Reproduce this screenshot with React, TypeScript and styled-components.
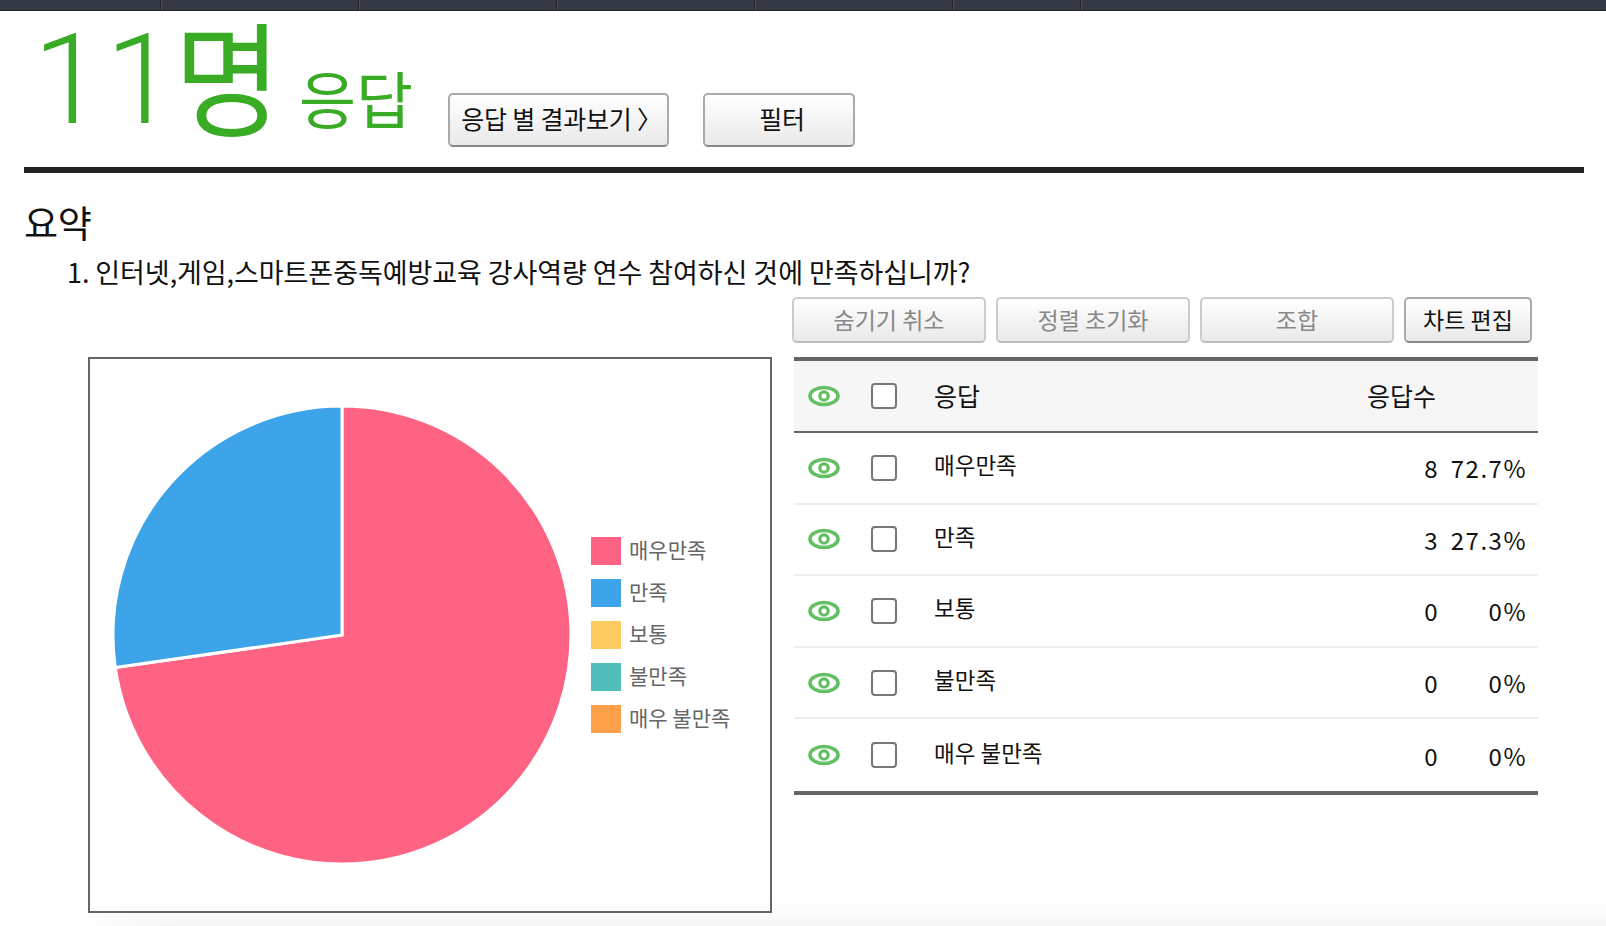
import React from 'react';
import styled, { createGlobalStyle } from 'styled-components';

const GlobalStyle = createGlobalStyle`
  html, body {
    margin: 0;
    padding: 0;
    height: 926px;
    overflow: hidden;
    background: #fff;
    font-family: 'Noto Sans CJK KR', 'Liberation Sans', sans-serif;
    color: #111;
  }
`;

const COLORS = ['#ff6384', '#3ea4ea', '#fdcb5f', '#52bebc', '#ffa04a'];

const ROWS = [
  { label: '매우만족', count: 8, pct: '72.7%' },
  { label: '만족', count: 3, pct: '27.3%' },
  { label: '보통', count: 0, pct: '0%' },
  { label: '불만족', count: 0, pct: '0%' },
  { label: '매우 불만족', count: 0, pct: '0%' },
];

const TopBar = styled.div`
  display: flex;
  height: 10px;
  background: #343744;
  border-bottom: 1px solid #22242c;
`;

const TopTab = styled.div<{ $w: number }>`
  width: ${({ $w }) => $w}px;
  box-sizing: border-box;
  border-right: 1px solid #22242c;
  box-shadow: 1px 0 0 #4c4f5a;
`;

const Page = styled.div`
  padding: 0 22px 0 24px;
`;

const TitleRow = styled.div`
  display: flex;
  align-items: flex-start;
  height: 156px;
  border-bottom: 6px solid #222;
  color: #3aab25;
`;

const Digits = styled.div`
  font-family: 'Roboto', sans-serif;
  font-weight: 300;
  font-size: 127px;
  line-height: 127px;
  letter-spacing: 2px;
  margin-top: 5px;
  padding-left: 9px;
  width: 158px;
  margin-right: -8px;
  box-sizing: border-box;
  white-space: nowrap;
`;

const BigHan = styled.div`
  font-size: 124px;
  line-height: 124px;
  width: 125px;
  white-space: nowrap;
  transform: scaleX(0.94);
  transform-origin: left center;
`;

const Unit = styled.div`
  font-size: 62px;
  line-height: 62px;
  margin-top: 55px;
  width: 149px;
  white-space: nowrap;
`;

const Btn = styled.button<{ $w: number; $off?: boolean }>`
  width: ${({ $w }) => $w}px;
  box-sizing: border-box;
  padding: 0;
  font-family: inherit;
  white-space: nowrap;
  color: ${({ $off }) => ($off ? '#888' : '#111')};
  border: 2px solid ${({ $off }) => ($off ? '#ccc' : '#aaa')};
  border-bottom-color: ${({ $off }) => ($off ? '#bbb' : '#888')};
  border-radius: 5px;
  background: linear-gradient(#fff, #e9e9e9);
`;

const TitleBtn = styled(Btn)`
  height: 54px;
  margin-top: 82px;
  padding: 0 0 4px 6px;
  font-size: 25px;
  line-height: 30px;
  letter-spacing: -0.2px;
  margin-right: 34px;
`;

const Heading = styled.h2`
  margin: 25px 0 0;
  font-size: 37px;
  line-height: 48px;
  font-weight: 400;
  letter-spacing: -0.4px;
`;

const Question = styled.div`
  margin: 7px 0 0 43px;
  font-size: 27px;
  line-height: 38px;
  letter-spacing: -0.07px;
  white-space: nowrap;
`;

const Toolbar = styled.div`
  display: flex;
  gap: 10px;
  margin: 6px 0 0 768px;
`;

const ToolBtn = styled(Btn)`
  height: 46px;
  padding-bottom: 3px;
  font-size: 23px;
  line-height: 30px;
`;

const Body = styled.div`
  display: flex;
  margin: 14px 0 0 64px;
`;

const ChartBox = styled.div`
  width: 684px;
  height: 556px;
  box-sizing: border-box;
  border: 2px solid #666;
  display: flex;
  align-items: center;
  padding-left: 22px;
`;

const PieSvg = styled.svg`
  flex: none;
  width: 460px;
  height: 460px;
`;

const Legend = styled.div`
  display: flex;
  flex-direction: column;
  gap: 14px;
  margin-left: 19px;
`;

const LegendItem = styled.div`
  display: flex;
  align-items: center;
  height: 28px;
  gap: 8px;
  font-size: 21px;
  color: #666;
  white-space: nowrap;
`;

const LegendText = styled.span`
  margin-top: -4px;
`;

const Swatch = styled.span<{ $c: string }>`
  width: 30px;
  height: 28px;
  background: ${({ $c }) => $c};
`;

const Table = styled.div`
  width: 744px;
  margin-left: 22px;
  align-self: flex-start;
  border-top: 4px solid #666;
  border-bottom: 4px solid #666;
`;

const Row = styled.div<{ $head?: boolean }>`
  display: grid;
  grid-template-columns: 77px 63px 1fr 120px 88px;
  align-items: center;
  height: ${({ $head }) => ($head ? '72px' : '71.6px')};
  box-sizing: border-box;
  padding-right: 11px;
  font-size: 22.5px;
  background: ${({ $head }) => ($head ? '#f6f6f6' : '#fff')};
  border-bottom: 2px solid ${({ $head }) => ($head ? '#666' : '#eee')};
  &:last-child { border-bottom: 0; }
`;

const EyeCell = styled.div`
  display: flex;
  justify-content: center;
  padding-right: 18px;
`;

const Check = styled.span`
  width: 26px;
  height: 26px;
  box-sizing: border-box;
  border: 2px solid #777;
  border-radius: 4px;
  background: #fff;
`;

const Label = styled.div`
  margin-top: -7px;
  white-space: nowrap;
`;

const HeadLabel = styled.div`
  margin-top: -2px;
  font-size: 25px;
  white-space: nowrap;
`;

const HeadCount = styled(HeadLabel)`
  grid-column: 4 / span 2;
  padding-left: 48px;
`;

const Num = styled.div`
  font-size: 24px;
  text-align: right;
  letter-spacing: 1.5px;
  white-space: nowrap;
`;

const BottomShade = styled.div`
  position: fixed;
  left: 120px;
  right: -200px;
  top: 950px;
  height: 40px;
  box-shadow: 0 0 60px 6px rgba(0, 0, 0, 0.14);
  pointer-events: none;
`;

const Eye = () => (
  <svg width="32" height="22" viewBox="0 0 32 22">
    <ellipse cx="16" cy="11" rx="14" ry="8.5" fill="#fff" stroke="#62bf62" strokeWidth="3.6" />
    <circle cx="16" cy="11" r="4.2" fill="#fff" stroke="#62bf62" strokeWidth="3.2" />
  </svg>
);

const slicePath = (from: number, to: number, r: number) => {
  const p = (a: number) => {
    const t = (a - 0.25) * 2 * Math.PI;
    return `${230 + r * Math.cos(t)} ${230 + r * Math.sin(t)}`;
  };
  return `M230 230L${p(from)}A${r} ${r} 0 ${to - from > 0.5 ? 1 : 0} 1 ${p(to)}Z`;
};

const Pie = () => (
  <PieSvg viewBox="0 0 460 460">
    <path d={slicePath(0, 8 / 11, 229)} fill={COLORS[0]} stroke="#fff" strokeWidth="3" />
    <path d={slicePath(8 / 11, 1, 229)} fill={COLORS[1]} stroke="#fff" strokeWidth="3" />
  </PieSvg>
);

export default function App() {
  return (
    <>
      <GlobalStyle />
      <TopBar>
        {[161, 198, 198, 198, 198, 128].map((w, i) => (
          <TopTab key={i} $w={w} />
        ))}
      </TopBar>
      <Page>
        <TitleRow>
          <Digits>11</Digits>
          <BigHan>명</BigHan>
          <Unit>응답</Unit>
          <TitleBtn $w={221}>응답 별 결과보기 〉</TitleBtn>
          <TitleBtn $w={152}>필터</TitleBtn>
        </TitleRow>
        <Heading>요약</Heading>
        <Question>1. 인터넷,게임,스마트폰중독예방교육 강사역량 연수 참여하신 것에 만족하십니까?</Question>
        <Toolbar>
          <ToolBtn $w={194} $off>숨기기 취소</ToolBtn>
          <ToolBtn $w={194} $off>정렬 초기화</ToolBtn>
          <ToolBtn $w={194} $off>조합</ToolBtn>
          <ToolBtn $w={128}>차트 편집</ToolBtn>
        </Toolbar>
        <Body>
          <ChartBox>
            <Pie />
            <Legend>
              {ROWS.map((r, i) => (
                <LegendItem key={r.label}>
                  <Swatch $c={COLORS[i]} />
                  <LegendText>{r.label}</LegendText>
                </LegendItem>
              ))}
            </Legend>
          </ChartBox>
          <Table>
            <Row $head>
              <EyeCell><Eye /></EyeCell>
              <Check />
              <HeadLabel>응답</HeadLabel>
              <HeadCount>응답수</HeadCount>
            </Row>
            {ROWS.map((r) => (
              <Row key={r.label}>
                <EyeCell><Eye /></EyeCell>
                <Check />
                <Label>{r.label}</Label>
                <Num>{r.count}</Num>
                <Num>{r.pct}</Num>
              </Row>
            ))}
          </Table>
        </Body>
      </Page>
      <BottomShade />
    </>
  );
}
